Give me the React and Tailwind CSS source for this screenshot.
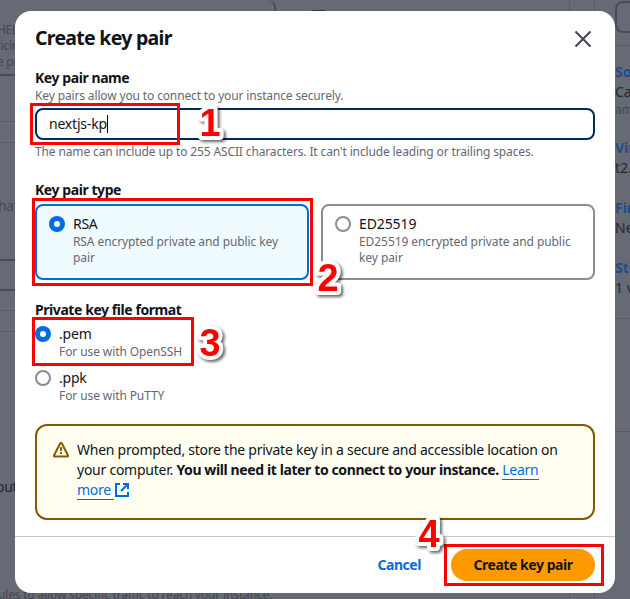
import React from "react";

function Radio({ checked }) {
  return checked ? (
    <span className="flex size-4 shrink-0 items-center justify-center rounded-full bg-[#006ce0]">
      <span className="size-1.5 rounded-full bg-white" />
    </span>
  ) : (
    <span className="size-4 shrink-0 rounded-full border-2 border-[#8c8c94] bg-white" />
  );
}

function Field({ label, children }) {
  return (
    <section className="flex flex-col">
      <h3 className="h-5 text-sm leading-5 font-bold tracking-[-0.43px] whitespace-nowrap">{label}</h3>
      {children}
    </section>
  );
}

function Step({ n, className }) {
  return (
    <svg className={"absolute overflow-visible drop-shadow-[2px_2px_1.5px_rgba(0,0,0,0.6)] " + className} width="24" height="34" viewBox="0 0 24 34">
      <text
        x="12"
        y="28"
        textAnchor="middle"
        fontFamily="Liberation Sans, Arial, sans-serif"
        fontWeight="700"
        fontSize="38"
        fill="#ff0000"
        stroke="#ffffff"
        strokeWidth="8"
        strokeLinejoin="round"
        paintOrder="stroke"
      >
        {n}
      </text>
    </svg>
  );
}

function Summary({ title, children, className }) {
  return (
    <div className={"whitespace-nowrap " + className}>
      <div className="h-5 text-sm leading-5 font-bold text-[#1f4c8b]">{title}</div>
      <div className="h-5 text-sm leading-5 text-[#23272f]">{children}</div>
    </div>
  );
}

function Backdrop() {
  return (
    <div className="flex h-full w-full text-[#444851]">
      <div className="flex h-full w-[570px] flex-col border-r border-[#555a64]">
        <div className="flex h-[22px] shrink-0">
          <div className="h-3 w-[276px] rounded-tr-lg border-r-2 border-[#474c57]" />
          <div className="mt-[10px] ml-[35px] h-1 w-[15px] rounded bg-[#343944]" />
        </div>
        <div className="-ml-[3px] h-[52px] shrink-0 text-xs leading-4 tracking-[-0.3px] whitespace-nowrap">
          <div>HEL</div>
          <div className="-ml-px">ricing</div>
          <div>e pr</div>
        </div>
        <div className="h-[47px] shrink-0 border-t-2 border-[#474c57]" />
        <div className="h-[21px] shrink-0 border-t border-[#555a64]" />
        <div className="h-[117px] shrink-0 border-t border-[#555a64] pt-[53px] text-sm leading-5">
          <span className="-ml-[2px] tracking-[-0.3px]">hat</span>
        </div>
        <div className="h-[30px] shrink-0 border-t-2 border-[#474c57]" />
        <div className="h-[21px] shrink-0 border-t-2 border-[#474c57]" />
        <div className="h-[21px] shrink-0 border-t border-[#555a64]" />
        <div className="h-[256px] shrink-0 border-t border-[#555a64] pt-[145px] text-sm leading-5 text-[#23272f]">
          <span className="-ml-1 tracking-[-0.3px]">out</span>
        </div>
        <div className="h-4 w-[271px] shrink-0 text-xs leading-4 whitespace-nowrap">
          <span className="-ml-0.5 tracking-[-0.16px]">ules to allow specific traffic to reach your instance.</span>
        </div>
      </div>
      <div className="h-full w-[25px] border-r border-[#555a64]" />
      <div className="flex h-full flex-1 flex-col overflow-hidden">
        <div className="h-[46px] shrink-0 border-b border-[#555a64] pt-px">
          <div className="ml-5 h-8 w-24 rounded-lg border-2 border-[#474c57]" />
        </div>
        <div className="h-[273px] shrink-0 border-b border-[#555a64] pt-4 pl-5">
          <Summary title="So" className="h-[76px]">
            Ca
            <div className="text-xs leading-4 text-[#444851]">am</div>
          </Summary>
          <Summary title="Vir" className="h-[60px]">t2.</Summary>
          <Summary title="Fir" className="h-[60px]">Ne</Summary>
          <Summary title="Sto" className="h-10">1 v</Summary>
        </div>
        <div className="h-[113px] shrink-0 border-b border-[#555a64]" />
      </div>
    </div>
  );
}

function WarningIcon() {
  return (
    <svg width="16" height="16" viewBox="0 0 16 16" fill="none" stroke="#855900" strokeWidth="2" strokeLinejoin="round" className="mt-0.5 shrink-0">
      <path d="M7.1 1.5 1.1 13.2c-.3.7.1 1.3.8 1.3h12.2c.7 0 1.1-.6.8-1.3L8.9 1.5c-.4-.7-1.4-.7-1.8 0Z" />
      <path d="M8 5v4M8 10v2" />
    </svg>
  );
}

function ExternalIcon() {
  return (
    <svg width="16" height="16" viewBox="0 0 16 16" fill="none" stroke="#006ce0" strokeWidth="2" className="inline-block align-[-3px]">
      <path d="M6 2H2v12h12v-4" />
      <path d="M9 2h5v5M14 2 7 9" />
    </svg>
  );
}

function Dialog() {
  return (
    <div className="flex h-[582px] w-[600px] flex-col rounded-[16px] bg-white text-[#0f141a]">
      <header className="flex h-[57px] shrink-0 items-start justify-between pt-[15px] pr-[23px] pl-5">
        <h2 className="text-[19.5px] leading-6 font-bold tracking-[-0.72px] whitespace-nowrap">Create key pair</h2>
        <svg width="18" height="18" viewBox="0 0 18 18" fill="none" stroke="#424650" strokeWidth="2" className="mt-[3.5px]">
          <path d="M1.5 1.5l15 15M16.5 1.5l-15 15" />
        </svg>
      </header>
      <div className="flex flex-1 flex-col px-5">
        <div className="h-[112px]">
          <Field label="Key pair name">
            <p className="h-5 text-xs leading-4 tracking-[-0.14px] whitespace-nowrap text-[#656871]">Key pairs allow you to connect to your instance securely.</p>
            <div className="flex h-8 items-center rounded-lg border-2 border-[#002b66] px-3 text-sm tracking-[-0.2px]">
              nextjs-kp<span className="h-[18px] w-px bg-black" />
            </div>
            <p className="mt-1 text-xs leading-4 tracking-[-0.135px] whitespace-nowrap text-[#656871]">
              The name can include up to 255 ASCII characters. It can't include leading or trailing spaces.
            </p>
          </Field>
        </div>
        <div className="h-[120px]">
          <Field label="Key pair type">
            <div className="mt-1 grid h-[76px] grid-cols-2 gap-3">
              <div className="flex gap-2 rounded-lg border-2 border-[#006ce0] bg-[#f0fbff] pt-[10px] pl-3">
                <Radio checked />
                <div className="-mt-0.5">
                  <div className="text-sm leading-5 tracking-[-0.3px]">RSA</div>
                  <p className="text-xs leading-4 tracking-[-0.09px] whitespace-nowrap text-[#656871]">RSA encrypted private and public key<br />pair</p>
                </div>
              </div>
              <div className="flex gap-2 rounded-lg border-2 border-[#8c8c94] pt-[10px] pl-3">
                <Radio />
                <div className="-mt-0.5">
                  <div className="text-sm leading-5 tracking-[-0.1px]">ED25519</div>
                  <p className="text-xs leading-4 tracking-[-0.07px] whitespace-nowrap text-[#656871]">ED25519 encrypted private and public<br />key pair</p>
                </div>
              </div>
            </div>
          </Field>
        </div>
        <div className="h-[124px]">
          <Field label="Private key file format">
            <div className="mt-1 flex flex-col gap-2">
              <div className="flex h-9 gap-2">
                <span className="mt-0.5"><Radio checked /></span>
                <div>
                  <div className="text-sm leading-5 tracking-[-0.2px]">.pem</div>
                  <p className="text-xs leading-4 tracking-[-0.1px] text-[#656871]">For use with OpenSSH</p>
                </div>
              </div>
              <div className="flex h-9 gap-2">
                <span className="mt-0.5 flex"><Radio /></span>
                <div>
                  <div className="text-sm leading-5 tracking-[-0.2px]">.ppk</div>
                  <p className="text-xs leading-4 tracking-[-0.1px] text-[#656871]">For use with PuTTY</p>
                </div>
              </div>
            </div>
          </Field>
        </div>
        <div className="flex h-24 gap-2 rounded-xl border-2 border-[#855900] bg-[#fffef0] pt-[14px] pl-4">
          <WarningIcon />
          <p className="text-sm leading-5 tracking-[-0.25px] whitespace-nowrap">
            When prompted, store the private key in a secure and accessible location on
            <br />
            your computer. <b className="tracking-[-0.39px]">You will need it later to connect to your instance.</b>{" "}
            <a className="border-b border-[#006ce0] text-[#006ce0]">Learn</a>
            <br />
            <a className="border-b border-[#006ce0] text-[#006ce0]">more&nbsp;</a>
            <ExternalIcon />
          </p>
        </div>
      </div>
      <footer className="flex h-[57px] shrink-0 items-start justify-end border-t border-[#c6c6cd] pt-3 pr-5 text-sm font-bold">
        <span className="mr-[30px] leading-8 tracking-[-0.45px] text-[#006ce0]">Cancel</span>
        <button className="h-8 w-36 rounded-full bg-[#ff9900] tracking-[-0.45px]">Create key pair</button>
      </footer>
    </div>
  );
}

export default function App() {
  return (
    <main className="relative h-[599px] w-[630px] overflow-hidden bg-[#656a74] font-['Noto_Sans','Open_Sans',sans-serif]">
      <Backdrop />
      <div className="absolute inset-0 flex pt-[11px] pl-[15px]">
        <Dialog />
      </div>
      <div className="absolute top-[103px] left-[30px] h-[42px] w-[150px] border-3 border-[#ff0000]" />
      <div className="absolute top-[198px] left-[32px] h-[88px] w-[281px] border-3 border-[#ff0000]" />
      <div className="absolute top-[317px] left-[32px] h-[49px] w-[162px] border-3 border-[#ff0000]" />
      <div className="absolute top-[544px] left-[444px] h-[42px] w-[160px] border-3 border-[#ff0000]" />
      <Step n="1" className="top-[108px] left-[198px]" />
      <Step n="2" className="top-[263px] left-[316px]" />
      <Step n="3" className="top-[328px] left-[198px]" />
      <Step n="4" className="top-[519px] left-[417px]" />
    </main>
  );
}
